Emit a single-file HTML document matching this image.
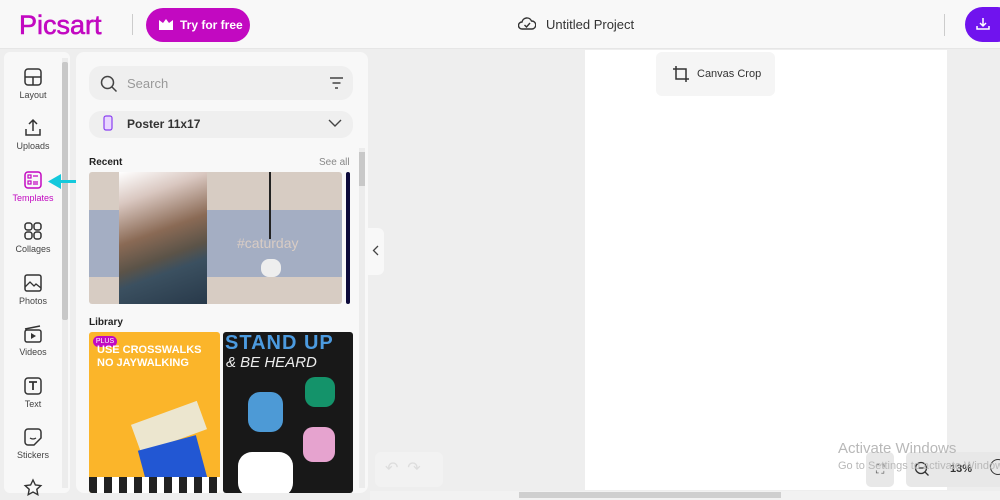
<!DOCTYPE html>
<html><head><meta charset="utf-8"><style>
*{margin:0;padding:0;box-sizing:border-box}
body{width:1000px;height:500px;overflow:hidden;background:#eeeeee;font-family:"Liberation Sans",sans-serif;position:relative;color:#333}
.a{position:absolute;white-space:nowrap}
.top{left:0;top:0;width:1000px;height:49px;background:#f8f8f8;border-bottom:1px solid #e6e6e6}
.rail{left:4px;top:52px;width:66px;height:441px;background:#f8f8f8;border-radius:6px}
.ri{position:absolute;left:0;width:58px;text-align:center;font-size:9px;color:#444}
.ri svg{display:block;margin:0 auto 3px}
.panel{left:76px;top:52px;width:292px;height:441px;background:#f8f8f8;border-radius:8px}
</style></head><body>
<div class="a top"></div>
<div class="a" style="left:19px;top:10px;font-size:27px;color:#c209c1;letter-spacing:0px;-webkit-text-stroke:0.6px #c209c1">Picsart</div>
<div class="a" style="left:132px;top:14px;width:1px;height:21px;background:#ccc"></div>
<div class="a" style="left:146px;top:8px;width:104px;height:34px;border-radius:17px;background:#c209c1;color:#fff;font-size:12px;font-weight:bold;line-height:34px;padding-left:34px">Try for free</div>
<svg class="a" style="left:158px;top:18px" width="16" height="13" viewBox="0 0 16 13"><path d="M1 2l4 3 3-4 3 4 4-3v10H1z" fill="#fff"/></svg>
<svg class="a" style="left:518px;top:16px" width="18" height="16" viewBox="0 0 18 16"><path d="M4 13a3.5 3.5 0 010-7 5 5 0 019.5-1A3.8 3.8 0 0114 13z" fill="none" stroke="#333" stroke-width="1.4"/><path d="M6.5 9l2 2 3.5-4" fill="none" stroke="#333" stroke-width="1.4"/></svg>
<div class="a" style="left:546px;top:17px;font-size:13px;color:#333">Untitled Project</div>
<div class="a" style="left:944px;top:14px;width:1px;height:22px;background:#ccc"></div>
<div class="a" style="left:965px;top:7px;width:50px;height:35px;border-radius:18px;background:#7013ee"></div>
<svg class="a" style="left:975px;top:16px" width="16" height="16" viewBox="0 0 16 16"><path d="M8 2v8M5 7l3 3 3-3M2 10v3h12v-3" fill="none" stroke="#fff" stroke-width="1.5"/></svg>

<div class="a rail"></div>
<div class="a" style="left:62px;top:58px;width:6px;height:430px;background:#ececec"></div>
<div class="a" style="left:62px;top:62px;width:6px;height:258px;background:#c8c8c8;border-radius:2px"></div>
<div class="ri" style="left:4px;top:67px"><svg width="20" height="20" viewBox="0 0 20 20"><rect x="2" y="2" width="16" height="16" rx="3" fill="none" stroke="#333" stroke-width="1.5"/><path d="M2 10h16M10 10v8" stroke="#333" stroke-width="1.5"/></svg>Layout</div>
<div class="ri" style="left:4px;top:118px"><svg width="20" height="20" viewBox="0 0 20 20"><path d="M10 13V2M6 6l4-4 4 4M3 11v6h14v-6" fill="none" stroke="#333" stroke-width="1.5"/></svg>Uploads</div>
<div class="ri" style="left:4px;top:170px;color:#c209c1"><svg width="20" height="20" viewBox="0 0 20 20"><rect x="2" y="2" width="16" height="16" rx="3" fill="none" stroke="#c209c1" stroke-width="1.5"/><rect x="5" y="5" width="3" height="3" fill="none" stroke="#c209c1" stroke-width="1.2"/><rect x="5" y="11" width="3" height="3" fill="none" stroke="#c209c1" stroke-width="1.2"/><path d="M10 6h5M10 12h5M10 14h5" stroke="#c209c1" stroke-width="1.2"/></svg>Templates</div>
<div class="ri" style="left:4px;top:221px"><svg width="20" height="20" viewBox="0 0 20 20"><rect x="2" y="2" width="7" height="7" rx="2.5" fill="none" stroke="#333" stroke-width="1.5"/><rect x="11" y="2" width="7" height="7" rx="2.5" fill="none" stroke="#333" stroke-width="1.5"/><rect x="2" y="11" width="7" height="7" rx="2.5" fill="none" stroke="#333" stroke-width="1.5"/><rect x="11" y="11" width="7" height="7" rx="2.5" fill="none" stroke="#333" stroke-width="1.5"/></svg>Collages</div>
<div class="ri" style="left:4px;top:273px"><svg width="20" height="20" viewBox="0 0 20 20"><rect x="2" y="2" width="16" height="16" rx="2" fill="none" stroke="#333" stroke-width="1.5"/><path d="M2 14l5-5 4 4 2-2 5 4" fill="none" stroke="#333" stroke-width="1.3"/></svg>Photos</div>
<div class="ri" style="left:4px;top:324px"><svg width="20" height="20" viewBox="0 0 20 20"><rect x="2" y="6" width="16" height="12" rx="2" fill="none" stroke="#333" stroke-width="1.5"/><path d="M2 5l15-3" stroke="#333" stroke-width="1.5"/><path d="M8 9v6l5-3z" fill="#333"/></svg>Videos</div>
<div class="ri" style="left:4px;top:376px"><svg width="20" height="20" viewBox="0 0 20 20"><rect x="2" y="2" width="16" height="16" rx="3" fill="none" stroke="#333" stroke-width="1.5"/><path d="M6 6h8M10 6v8" stroke="#333" stroke-width="1.8"/></svg>Text</div>
<div class="ri" style="left:4px;top:427px"><svg width="20" height="20" viewBox="0 0 20 20"><path d="M2 5a3 3 0 013-3h10a3 3 0 013 3v6l-7 7H5a3 3 0 01-3-3z" fill="none" stroke="#333" stroke-width="1.5"/><path d="M7 11q3 2 6 0" fill="none" stroke="#333" stroke-width="1.3"/></svg>Stickers</div>
<svg class="a" style="left:23px;top:478px" width="20" height="20" viewBox="0 0 20 20"><path d="M10 2l2.4 5 5.4.6-4 3.7 1 5.4L10 14l-4.8 2.7 1-5.4-4-3.7 5.4-.6z" fill="none" stroke="#333" stroke-width="1.4"/></svg>
<div class="a" style="left:56px;top:180px;width:44px;height:3px;background:#14c9dc"></div>
<svg class="a" style="left:48px;top:174px" width="14" height="15" viewBox="0 0 14 15"><path d="M13 0L0 7.5 13 15z" fill="#14c9dc"/></svg>

<div class="a panel"></div>
<div class="a" style="left:89px;top:66px;width:264px;height:34px;border-radius:12px;background:#efefef"></div>
<svg class="a" style="left:100px;top:75px" width="18" height="18" viewBox="0 0 18 18"><circle cx="7.5" cy="7.5" r="6" fill="none" stroke="#444" stroke-width="1.5"/><path d="M12 12l4.5 4.5" stroke="#444" stroke-width="1.5"/></svg>
<div class="a" style="left:127px;top:76px;font-size:13px;color:#999">Search</div>
<svg class="a" style="left:329px;top:77px" width="15" height="12" viewBox="0 0 15 12"><path d="M1 1h13M3.5 6h8M6 11h3" stroke="#444" stroke-width="1.5"/></svg>
<div class="a" style="left:89px;top:111px;width:264px;height:27px;border-radius:12px;background:#efefef"></div>
<svg class="a" style="left:103px;top:115px" width="10" height="16" viewBox="0 0 10 16"><rect x="1" y="1" width="8" height="14" rx="2" fill="#e9d6ff" stroke="#8a3ff0" stroke-width="1.2"/></svg>
<div class="a" style="left:127px;top:117px;font-size:12px;font-weight:bold;color:#333">Poster 11x17</div>
<svg class="a" style="left:328px;top:119px" width="14" height="9" viewBox="0 0 14 9"><path d="M1 1l6 6 6-6" fill="none" stroke="#444" stroke-width="1.4"/></svg>
<div class="a" style="left:359px;top:148px;width:6px;height:340px;background:#ececec"></div>
<div class="a" style="left:359px;top:152px;width:6px;height:34px;background:#c8c8c8"></div>
<div class="a" style="left:89px;top:157px;font-size:10px;font-weight:bold;color:#222">Recent</div>
<div class="a" style="left:319px;top:157px;font-size:10px;color:#888">See all</div>
<div class="a" style="left:89px;top:172px;width:253px;height:132px;background:#d7ccc3;border-radius:3px;overflow:hidden">
 <div class="a" style="left:0;top:38px;width:253px;height:67px;background:#a4aec3"></div>
 <div class="a" style="left:30px;top:0;width:88px;height:132px;background:linear-gradient(160deg,#fff 0%,#d9c7c0 20%,#8a6a55 45%,#5b5348 62%,#3b5060 72%,#28394a 100%)"></div>
 <div class="a" style="left:180px;top:0;width:2px;height:67px;background:#222"></div>
 <div class="a" style="left:148px;top:63px;font-size:14px;color:#d8ccc4">#caturday</div>
 <div class="a" style="left:172px;top:87px;width:20px;height:18px;border-radius:8px;background:#eee"></div>
</div>
<div class="a" style="left:346px;top:172px;width:4px;height:132px;background:#0c0a3a;border-radius:2px"></div>
<div class="a" style="left:89px;top:317px;font-size:10px;font-weight:bold;color:#222">Library</div>
<div class="a" style="left:89px;top:332px;width:131px;height:161px;background:#fbb52a;border-radius:3px;overflow:hidden">
 <div class="a" style="left:4px;top:4px;width:24px;height:11px;border-radius:6px;background:#c209c1;color:#fff;font-size:7px;line-height:11px;text-align:center">PLUS</div>
 <div class="a" style="left:8px;top:12px;font-size:11px;font-weight:bold;color:#fff;line-height:13px">USE CROSSWALKS<br>NO JAYWALKING</div>
 <div class="a" style="left:45px;top:80px;width:70px;height:30px;background:#ece6cf;transform:rotate(-20deg)"></div>
 <div class="a" style="left:55px;top:110px;width:60px;height:55px;background:#2257d3;transform:rotate(-15deg)"></div>
 <div class="a" style="left:0;top:145px;width:131px;height:16px;background:repeating-linear-gradient(90deg,#222 0 8px,#fff 8px 15px)"></div>
</div>
<div class="a" style="left:223px;top:332px;width:130px;height:161px;background:#181818;border-radius:3px;overflow:hidden">
 <div class="a" style="left:2px;top:0;font-size:20px;font-weight:bold;color:#4c9be0;letter-spacing:1px">STAND UP</div>
 <div class="a" style="left:3px;top:22px;font-size:15px;font-style:italic;color:#eee">&amp; BE HEARD</div>
 <div class="a" style="left:25px;top:60px;width:35px;height:40px;background:#4d9ad6;border-radius:12px"></div>
 <div class="a" style="left:82px;top:45px;width:30px;height:30px;background:#14936a;border-radius:10px"></div>
 <div class="a" style="left:80px;top:95px;width:32px;height:35px;background:#e6a3cf;border-radius:10px"></div>
 <div class="a" style="left:15px;top:120px;width:55px;height:45px;background:#fff;border-radius:14px"></div>
</div>

<div class="a" style="left:368px;top:228px;width:16px;height:47px;background:#f8f8f8;border-radius:0 6px 6px 0"></div>
<svg class="a" style="left:372px;top:245px" width="7" height="11" viewBox="0 0 7 11"><path d="M6 1L1.5 5.5 6 10" fill="none" stroke="#444" stroke-width="1.3"/></svg>

<div class="a" style="left:585px;top:50px;width:362px;height:440px;background:#fff"></div>
<div class="a" style="left:656px;top:52px;width:119px;height:44px;background:#f5f5f5;border-radius:6px"></div>
<svg class="a" style="left:672px;top:65px" width="18" height="18" viewBox="0 0 18 18"><path d="M4 1v13h13M1 4h13v13" fill="none" stroke="#333" stroke-width="1.5"/></svg>
<div class="a" style="left:697px;top:68px;font-size:11px;color:#333">Canvas Crop</div>

<div class="a" style="left:375px;top:452px;width:68px;height:35px;background:#f2f2f2;border-radius:6px"></div>
<div class="a" style="left:385px;top:458px;font-size:16px;color:#ddd">↶ &nbsp;↷</div>
<div class="a" style="left:866px;top:452px;width:28px;height:35px;background:#e8e8e8;border-radius:5px"></div>
<div class="a" style="left:906px;top:452px;width:100px;height:35px;background:#e8e8e8;border-radius:5px"></div>
<div class="a" style="left:876px;top:462px;font-size:12px;color:#555">⛶</div>
<svg class="a" style="left:914px;top:461px" width="16" height="16" viewBox="0 0 16 16"><circle cx="7" cy="7" r="5.5" fill="none" stroke="#333" stroke-width="1.3"/><path d="M4.5 7h5M11 11l3.5 3.5" stroke="#333" stroke-width="1.3"/></svg>
<div class="a" style="left:950px;top:463px;font-size:11px;font-weight:bold;color:#333">13%</div>
<div class="a" style="left:990px;top:459px;width:16px;height:16px;border:1.3px solid #333;border-radius:50%"></div>
<div class="a" style="left:838px;top:440px;font-size:15px;color:#b8b8b8">Activate Windows</div>
<div class="a" style="left:838px;top:460px;font-size:11px;color:#b8b8b8">Go to Settings to activate Windows.</div>
<div class="a" style="left:370px;top:491px;width:630px;height:9px;background:#f2f2f2"></div>
<div class="a" style="left:519px;top:492px;width:262px;height:6px;background:#cfcfcf"></div>
</body></html>
